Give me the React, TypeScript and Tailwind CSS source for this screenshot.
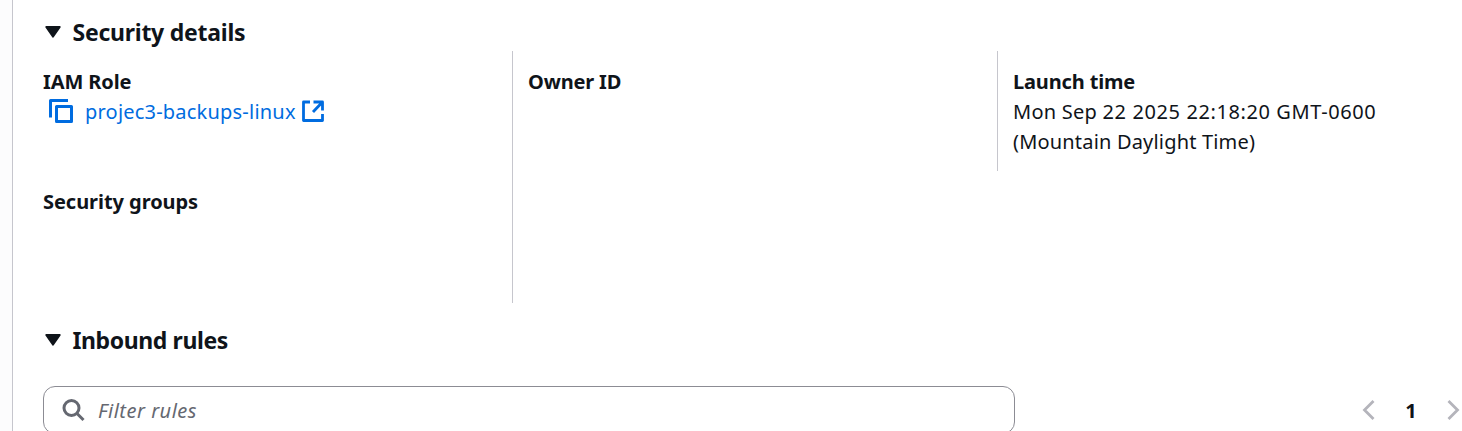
import React from "react";

function Caret() {
  return (
    <svg width="18" height="14" viewBox="0 0 18 14" className="shrink-0">
      <path d="M2.200 1.900H15.800L9 11.800z" fill="#0f141a" stroke="#0f141a" strokeWidth="1.800" strokeLinejoin="round" />
    </svg>
  );
}

function SectionTitle({ children }: { children: React.ReactNode }) {
  return (
    <h2 className="flex items-center gap-[11px] pl-[1px] text-[23px] leading-[30px] font-bold">
      <Caret />
      {children}
    </h2>
  );
}

export default function App() {
  return (
    <div className="flex h-[431px] w-[1462px] overflow-hidden bg-white font-['Noto_Sans',sans-serif] text-[20px] leading-[30px] text-[#0f141a]">
      <div className="w-[13px] shrink-0 border-r border-[#c6c6cd] bg-[#fcfcfd]" />
      <main className="flex w-[1449px] shrink-0 flex-col pt-[17px] pl-[30px]">
        <SectionTitle>
          <span className="-ml-[0.5px] tracking-[-0.25px]">Security details</span>
        </SectionTitle>
        <div className="mt-[4px] flex h-[252px] shrink-0">
          <div className="w-[469px] pt-[16px]">
            <div className="font-bold tracking-[-0.1px]">IAM Role</div>
            <div className="flex items-center pl-[5px] text-[#006ce0]">
              <svg width="26" height="26" viewBox="0 0 26 26" fill="none" stroke="#006ce0" strokeWidth="3" strokeLinejoin="round">
                <path d="M2.500 18.500V1.500H20" />
                <path d="M8.500 7.500H23.500V22.500H8.500z" />
              </svg>
              <span className="ml-[11px] tracking-[0.21px]">projec3-backups-linux</span>
              <svg width="24" height="24" viewBox="0 0 24 24" fill="none" stroke="#006ce0" strokeWidth="2.800" strokeLinejoin="round" className="ml-[5px]">
                <path d="M9 2H2.500V20.500H21.500V14M12.500 2H21.500V10.500M21 2.500L12 12" />
              </svg>
            </div>
            <div className="mt-[60px] font-bold tracking-[-0.05px]">Security groups</div>
          </div>
          <div className="w-[485px] border-l border-[#c6c6cd] pt-[16px] pl-[15px] font-bold tracking-[-0.15px]">Owner ID</div>
          <div className="h-[120px] w-[450px] border-l border-[#c6c6cd] pt-[16px] pl-[15px]">
            <div className="font-bold tracking-[-0.15px]">Launch time</div>
            <div className="whitespace-nowrap">
              <span className="block tracking-[0.6px]">
                <span className="tracking-[0.25px]">Mon Sep </span>
                22 2025 22:18:20 GMT-0600
              </span>
              <span className="block tracking-[0.18px]">(Mountain Daylight Time)</span>
            </div>
          </div>
        </div>
        <div className="mt-[22px]">
          <SectionTitle>
            <span className="-ml-[0.5px] tracking-[-0.4px]">Inbound rules</span>
          </SectionTitle>
        </div>
        <div className="mt-[31px] flex h-[48px] shrink-0 items-center">
          <div className="flex h-[48px] w-[972px] items-center rounded-[12px] border border-[#8c8c94] pl-[18px] text-[#656871] italic">
            <svg width="24" height="24" viewBox="0 0 24 24" fill="none" stroke="#656871" strokeWidth="3">
              <circle cx="9.500" cy="10" r="7.500" />
              <path d="M14.500 15L21.500 22" />
            </svg>
            <span className="ml-[12px] pt-[2px] tracking-[0.5px]">Filter rules</span>
          </div>
          <div className="ml-[347px] flex items-center">
            <svg width="14" height="20" viewBox="0 0 14 20" fill="none" stroke="#b4b4bb" strokeWidth="2.800">
              <path d="M11.500 1L2.500 10L11.500 19" />
            </svg>
            <span className="w-[70px] pt-[2px] text-center font-bold">1</span>
            <svg width="14" height="20" viewBox="0 0 14 20" fill="none" stroke="#b4b4bb" strokeWidth="2.800">
              <path d="M2.500 1L11.500 10L2.500 19" />
            </svg>
          </div>
        </div>
      </main>
    </div>
  );
}
